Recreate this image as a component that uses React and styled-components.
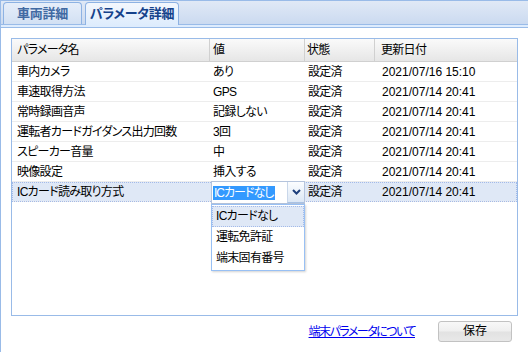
import React from 'react';
import styled, { createGlobalStyle, css } from 'styled-components';

const GlobalStyle = createGlobalStyle`
  html, body { margin: 0; padding: 0; background: #fff; }
  body {
    font-family: "Liberation Sans", "Noto Sans CJK JP", sans-serif;
    font-size: 12px;
    color: #000;
    font-feature-settings: "palt";
  }
  * { box-sizing: border-box; }
`;

const COLS = '198px 95px 70px 1fr';

const Page = styled.div`
  width: 528px;
  height: 352px;
  overflow: hidden;
  display: flex;
  flex-direction: column;
`;

const TabStrip = styled.div`
  display: flex;
  align-items: flex-end;
  gap: 3px;
  height: 25px;
  padding: 1px 0 0 2px;
  border-top: 1px solid #99bbe8;
  border-left: 1px solid #99bbe8;
  border-bottom: 1px solid #99bbe8;
  background: linear-gradient(#e0e9f6, #cbdaf0);
`;

const Tab = styled.div`
  width: ${p => p.$w}px;
  flex: none;
  height: 22px;
  border: 1px solid #8db2e3;
  border-bottom: none;
  border-radius: 4px 4px 0 0;
  font-weight: bold;
  font-size: 13px;
  letter-spacing: -0.3px;
  line-height: 21px;
  text-align: center;
  white-space: nowrap;
  color: #416aa3;
  background: linear-gradient(#e6eefa, #d2e0f3);
  ${p => p.$active && css`
    height: 23px;
    margin-bottom: -1px;
    color: #15428b;
    background: linear-gradient(#f3f7fd, #deecfd);
  `}
`;

const TabSpacer = styled.div`
  height: 3px;
  background: #deecfd;
  border-left: 1px solid #99bbe8;
  border-bottom: 1px solid #99bbe8;
`;

const PanelBody = styled.div`
  flex: 1;
  border-left: 1px solid #99bbe8;
  padding: 10px 10px 0 10px;
  display: flex;
  flex-direction: column;
`;

const Grid = styled.div`
  position: relative;
  height: 278px;
  border: 1px solid #99bbe8;
  background: #fff;
`;

const HeaderRow = styled.div`
  display: grid;
  grid-template-columns: ${COLS};
  height: 23px;
  border-bottom: 1px solid #d0d0d0;
  background: linear-gradient(#fafafa, #e6e6e6);
`;

const HeaderCell = styled.div`
  min-width: 0;
  padding-left: ${p => p.$pad}px;
  border-right: ${p => (p.$last ? 'none' : '1px solid #d0d0d0')};
  letter-spacing: -0.7px;
  line-height: 22px;
  white-space: nowrap;
  overflow: hidden;
`;

const Row = styled.div`
  display: grid;
  grid-template-columns: ${COLS};
  height: 20px;
  border-bottom: 1px solid #ededed;
  padding-top: 1px;
  ${p => p.$selected && css`
    background: #dfe8f6;
    outline: 1px dotted #a3bae9;
    outline-offset: -1px;
  `}
`;

const Cell = styled.div`
  min-width: 0;
  padding-left: ${p => p.$pad}px;
  letter-spacing: ${p => (p.$tight ? '-0.7px' : '0')};
  line-height: 18px;
  white-space: nowrap;
  overflow: hidden;
`;

const Combo = styled.div`
  position: absolute;
  left: 199px;
  top: 142px;
  width: 94px;
  height: 23px;
  display: flex;
  border: 1px solid #b5c4dc;
  background: #fff;
`;

const ComboInput = styled.div`
  flex: 1;
  padding-left: 1px;
  display: flex;
  align-items: center;
`;

const Selection = styled.span`
  display: inline-block;
  background: #3399ff;
  color: #fff;
  letter-spacing: -1px;
  line-height: 14px;
  padding: 0 2px 0 1px;
`;

const Trigger = styled.div`
  width: 17px;
  display: flex;
  align-items: center;
  justify-content: center;
  border-left: 1px solid #c9d7ea;
  border-bottom: 1px solid #a9c2e4;
  background: linear-gradient(#fbfdff, #dce7f5);
`;

const DropList = styled.div`
  position: absolute;
  left: 199px;
  top: 165px;
  width: 94px;
  height: 67px;
  padding-top: 1px;
  border: 1px solid #98c0f4;
  background: #fff;
  box-shadow: 1px 1px 2px rgba(0, 0, 0, 0.18);
`;

const DropItem = styled.div`
  height: 21px;
  line-height: 19px;
  padding-left: 3px;
  letter-spacing: -0.7px;
  border: 1px solid transparent;
  white-space: nowrap;
  ${p => p.$selected && css`
    background: #dfe8f6;
    border: 1px dotted #a3bae9;
  `}
`;

const Footer = styled.div`
  display: flex;
  justify-content: flex-end;
  align-items: center;
  gap: 23px;
  margin-top: 5px;
  padding-right: 6px;
`;

const HelpLink = styled.a`
  color: #0000ee;
  text-decoration: underline;
  font-size: 12px;
  letter-spacing: -1.5px;
  line-height: 16px;
  cursor: pointer;
`;

const SaveButton = styled.button`
  width: 74px;
  height: 21px;
  padding: 0;
  border: 1px solid #c2c2c2;
  border-radius: 3px;
  font-family: inherit;
  font-size: 12px;
  color: #000;
  line-height: 19px;
  background: linear-gradient(#f8f8f8 0%, #efefef 48%, #e2e2e2 52%, #e8e8e8 100%);
`;

const headPad = [5, 3, 2, 6];
const cellPad = [5, 3, 3, 7];

const headers = ['パラメータ名', '値', '状態', '更新日付'];

const rows = [
  ['車内カメラ', 'あり', '設定済', '2021/07/16 15:10'],
  ['車速取得方法', 'GPS', '設定済', '2021/07/14 20:41'],
  ['常時録画音声', '記録しない', '設定済', '2021/07/14 20:41'],
  ['運転者カードガイダンス出力回数', '3回', '設定済', '2021/07/14 20:41'],
  ['スピーカー音量', '中', '設定済', '2021/07/14 20:41'],
  ['映像設定', '挿入する', '設定済', '2021/07/14 20:41'],
  ['ICカード読み取り方式', 'ICカードなし', '設定済', '2021/07/14 20:41'],
];

const options = ['ICカードなし', '運転免許証', '端末固有番号'];

function Chevron() {
  return (
    <svg width="9" height="6" viewBox="0 0 9 6">
      <path d="M1 1 L4.5 4.5 L8 1" fill="none" stroke="#1d3f7c" strokeWidth="2" />
    </svg>
  );
}

export default function App() {
  return (
    <>
      <GlobalStyle />
      <Page>
        <TabStrip>
          <Tab $w={79}>車両詳細</Tab>
          <Tab $w={94} $active>パラメータ詳細</Tab>
        </TabStrip>
        <TabSpacer />
        <PanelBody>
          <Grid>
            <HeaderRow>
              {headers.map((h, i) => (
                <HeaderCell key={h} $pad={headPad[i]} $last={i === headers.length - 1}>{h}</HeaderCell>
              ))}
            </HeaderRow>
            {rows.map((r, ri) => (
              <Row key={ri} $selected={ri === rows.length - 1}>
                {r.map((c, ci) => (
                  <Cell key={ci} $pad={cellPad[ci]} $tight={ci < 3}>{c}</Cell>
                ))}
              </Row>
            ))}
            <Combo>
              <ComboInput>
                <Selection>ICカードなし</Selection>
              </ComboInput>
              <Trigger>
                <Chevron />
              </Trigger>
            </Combo>
            <DropList>
              {options.map((o, i) => (
                <DropItem key={o} $selected={i === 0}>{o}</DropItem>
              ))}
            </DropList>
          </Grid>
          <Footer>
            <HelpLink>端末パラメータについて</HelpLink>
            <SaveButton>保存</SaveButton>
          </Footer>
        </PanelBody>
      </Page>
    </>
  );
}
